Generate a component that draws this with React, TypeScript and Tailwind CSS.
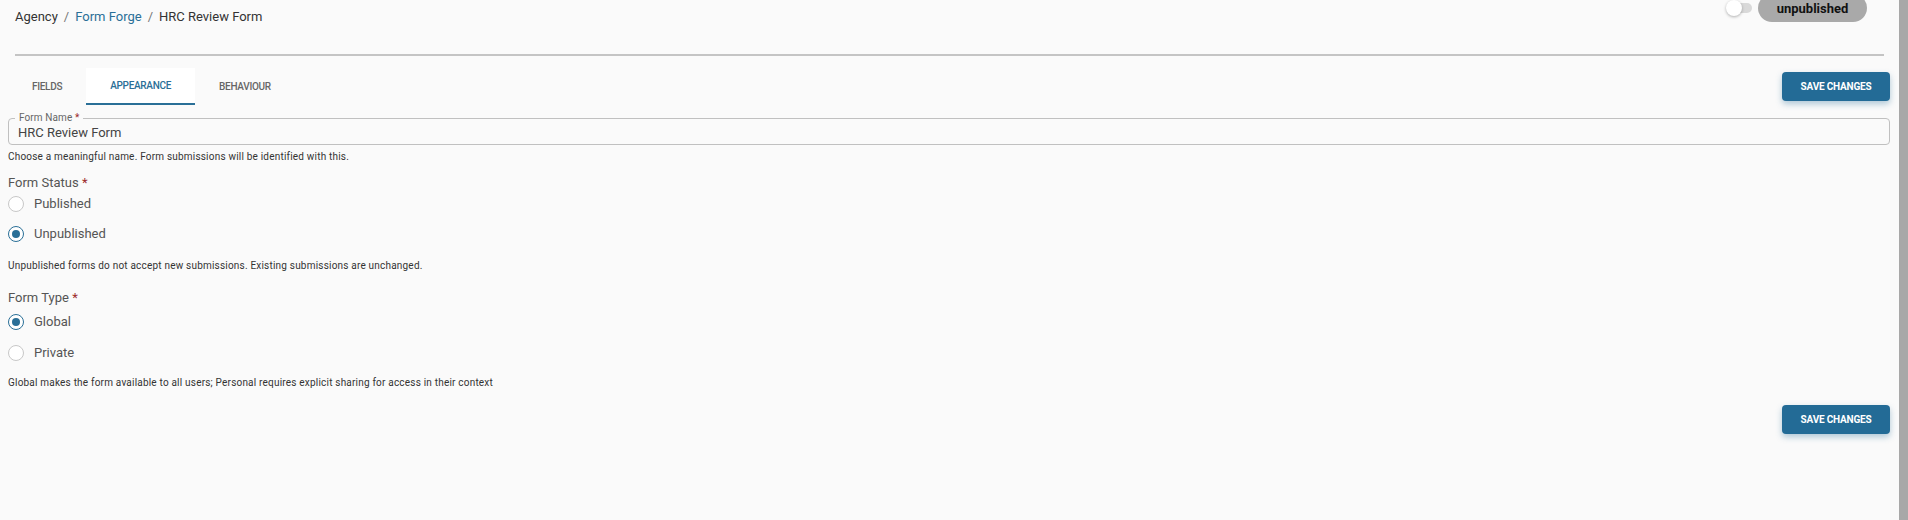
import React from "react";

function Radio({ checked, label, h }: { checked: boolean; label: string; h: string }) {
  return (
    <div className={`flex items-center ${h}`}>
      {checked ? (
        <span className="flex h-[16px] w-[16px] items-center justify-center rounded-full border-[1.5px] border-[#2a6f97] bg-white">
          <span className="h-[8px] w-[8px] rounded-full bg-[#2a6f97]" />
        </span>
      ) : (
        <span className="h-[16px] w-[16px] rounded-full border border-[#c8c8c8] bg-white" />
      )}
      <span className="ml-[10px] text-[13px] leading-[16px] text-[#555]">{label}</span>
    </div>
  );
}

function SaveButton({ className = "" }: { className?: string }) {
  return (
    <button className={`flex h-[29px] w-[108px] items-center justify-center rounded-[4px] bg-[#236b96] text-[10px] font-bold tracking-[-0.2px] text-white shadow-[0_3px_6px_rgba(35,107,150,0.35)] ${className}`}>
      SAVE CHANGES
    </button>
  );
}

export default function App() {
  return (
    <div
      className="flex h-[520px] w-full overflow-hidden bg-[#fafafa]"
      style={{ fontFamily: "Roboto, 'Liberation Sans', sans-serif" }}
    >
      <div className="flex min-w-0 flex-1 flex-col">
        {/* header */}
        <div className="flex h-[54px] items-start justify-between pl-[15px] pr-[32px]">
          <div className="mt-[9px] flex items-center text-[13px] leading-[16px]">
            <span className="text-[#333]">Agency</span>
            <span className="mx-[6px] text-[#777]">/</span>
            <span className="text-[#2a6f97]">Form Forge</span>
            <span className="mx-[6px] text-[#777]">/</span>
            <span className="text-[#333]">HRC Review Form</span>
          </div>
          <div className="flex items-start">
            <div className="relative mt-[3px] ml-[4px] h-[10px] w-[22px] rounded-full bg-[#d9d9d9]">
              <span className="absolute left-[-4px] top-[-3px] h-[16px] w-[16px] rounded-full bg-white shadow-[0_1px_3px_rgba(0,0,0,0.3)]" />
            </div>
            <div className="ml-[6px] mt-[-6px] flex h-[28px] w-[109px] items-center justify-center rounded-full bg-[#a9a9a9] pt-[2px] text-[13px] font-bold text-[#111]">
              unpublished
            </div>
          </div>
        </div>
        <div className="mx-[15px] h-[2px] bg-[#c4c4c4]" />

        {/* tabs */}
        <div className="mt-[12px] flex h-[37px] items-start justify-between pl-[8px] pr-[9px]">
          <div className="flex h-[37px]">
            <div className="flex items-center px-[24px] text-[10px] font-medium tracking-[-0.3px] text-[#666]">FIELDS</div>
            <div className="flex items-center border-b-2 border-[#2a6f97] bg-white px-[24px] text-[10px] font-medium tracking-[-0.3px] text-[#2a6f97]">
              APPEARANCE
            </div>
            <div className="flex items-center px-[24px] text-[10px] font-medium tracking-[-0.3px] text-[#666]">BEHAVIOUR</div>
          </div>
          <SaveButton className="mt-[4px]" />
        </div>

        {/* form */}
        <div className="flex flex-col pl-[8px] pr-[9px]">
          <div className="relative mt-[13px] flex h-[27px] items-center rounded-[4px] border border-[#c0c0c0] px-[9px]">
            <span className="absolute left-[6px] top-[-7px] bg-[#fafafa] px-[4px] text-[10px] leading-[12px] tracking-[0.1px] text-[#666]">
              Form Name <span className="text-[#9c2b2b]">*</span>
            </span>
            <span className="mt-[2px] text-[13px] text-[#444]">HRC Review Form</span>
          </div>
          <div className="mt-[6px] text-[10px] leading-[12px] tracking-[0.2px] text-[#333]">
            Choose a meaningful name. Form submissions will be identified with this.
          </div>

          <div className="mt-[12px] text-[13px] leading-[16px] text-[#555]">
            Form Status <span className="text-[#9c2b2b]">*</span>
          </div>
          <div className="-mt-[2px] flex flex-col">
            <Radio checked={false} label="Published" h="h-[30px]" />
            <Radio checked={true} label="Unpublished" h="h-[30px]" />
          </div>
          <div className="mt-[11px] text-[10px] leading-[12px] tracking-[0.2px] text-[#333]">
            Unpublished forms do not accept new submissions. Existing submissions are unchanged.
          </div>

          <div className="mt-[18px] text-[13px] leading-[16px] text-[#555]">
            Form Type <span className="text-[#9c2b2b]">*</span>
          </div>
          <div className="flex flex-col">
            <Radio checked={true} label="Global" h="h-[31px]" />
            <Radio checked={false} label="Private" h="h-[31px]" />
          </div>
          <div className="mt-[9px] text-[10px] leading-[12px] tracking-[0.2px] text-[#333]">
            Global makes the form available to all users; Personal requires explicit sharing for access in their context
          </div>

          <div className="mt-[16px] flex justify-end">
            <SaveButton />
          </div>
        </div>
      </div>
      <div className="h-full w-[9px] bg-[#a8a8a8]" />
    </div>
  );
}
